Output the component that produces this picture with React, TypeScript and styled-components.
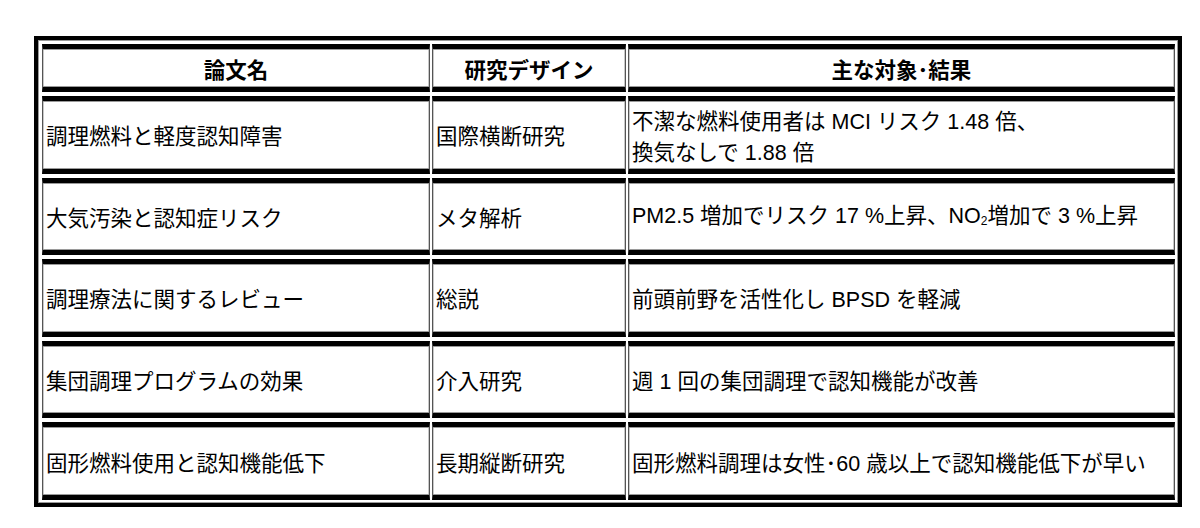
import React from "react";
import styled, { createGlobalStyle } from "styled-components";

const Global = createGlobalStyle`
  html, body {
    margin: 0;
    padding: 0;
    background: #ffffff;
  }
  body {
    font-family: "Liberation Sans", "Noto Sans CJK JP", sans-serif;
    color: #000;
  }
`;

const Page = styled.div`
  padding: 36px 0 0 34px;
`;

const Table = styled.div`
  display: grid;
  width: max-content;
  grid-template-columns: 388px 194px 547px;
  grid-template-rows: 48px repeat(5, 77.6px);
  column-gap: 2px;
  row-gap: 4px;
  padding: 4px 3px 3px 4px;
  border: 4px solid #000;
  box-shadow: inset 1px 1px 0 #9a9a9a, inset -1px -1px 0 #9a9a9a;
`;

const Cell = styled.div<{ $head?: boolean }>`
  box-sizing: border-box;
  display: flex;
  align-items: center;
  justify-content: ${(p) => (p.$head ? "center" : "flex-start")};
  padding: 6px 3px 0;
  border-top: 5px solid #000;
  border-bottom: 5px solid #000;
  border-left: 1px solid #555;
  border-right: 1px solid #555;
  box-shadow: inset 0 1px 0 #9a9a9a, inset 0 -1px 0 #9a9a9a, inset 1px 0 0 #c8c8c8,
    inset -1px 0 0 #c8c8c8;
  font-size: 21.5px;
  font-weight: ${(p) => (p.$head ? 700 : 400)};
  line-height: 31px;
  white-space: nowrap;
`;

const Sub = styled.span`
  font-size: 12px;
  vertical-align: -2px;
`;

type Row = { title: string; design: string; result: React.ReactNode };

const rows: Row[] = [
  {
    title: "調理燃料と軽度認知障害",
    design: "国際横断研究",
    result: (
      <span>
        不潔な燃料使用者は MCI リスク 1.48 倍、
        <br />
        換気なしで 1.88 倍
      </span>
    ),
  },
  {
    title: "大気汚染と認知症リスク",
    design: "メタ解析",
    result: (
      <span>
        PM2.5 増加でリスク 17 %上昇、NO<Sub>2</Sub>増加で 3 %上昇
      </span>
    ),
  },
  {
    title: "調理療法に関するレビュー",
    design: "総説",
    result: <span>前頭前野を活性化し BPSD を軽減</span>,
  },
  {
    title: "集団調理プログラムの効果",
    design: "介入研究",
    result: <span>週 1 回の集団調理で認知機能が改善</span>,
  },
  {
    title: "固形燃料使用と認知機能低下",
    design: "長期縦断研究",
    result: <span>固形燃料調理は女性･60 歳以上で認知機能低下が早い</span>,
  },
];

export default function App() {
  return (
    <>
      <Global />
      <Page>
        <Table>
          <Cell $head>論文名</Cell>
          <Cell $head>研究デザイン</Cell>
          <Cell $head>主な対象･結果</Cell>
          {rows.map((r) => (
            <React.Fragment key={r.title}>
              <Cell>{r.title}</Cell>
              <Cell>{r.design}</Cell>
              <Cell>{r.result}</Cell>
            </React.Fragment>
          ))}
        </Table>
      </Page>
    </>
  );
}
